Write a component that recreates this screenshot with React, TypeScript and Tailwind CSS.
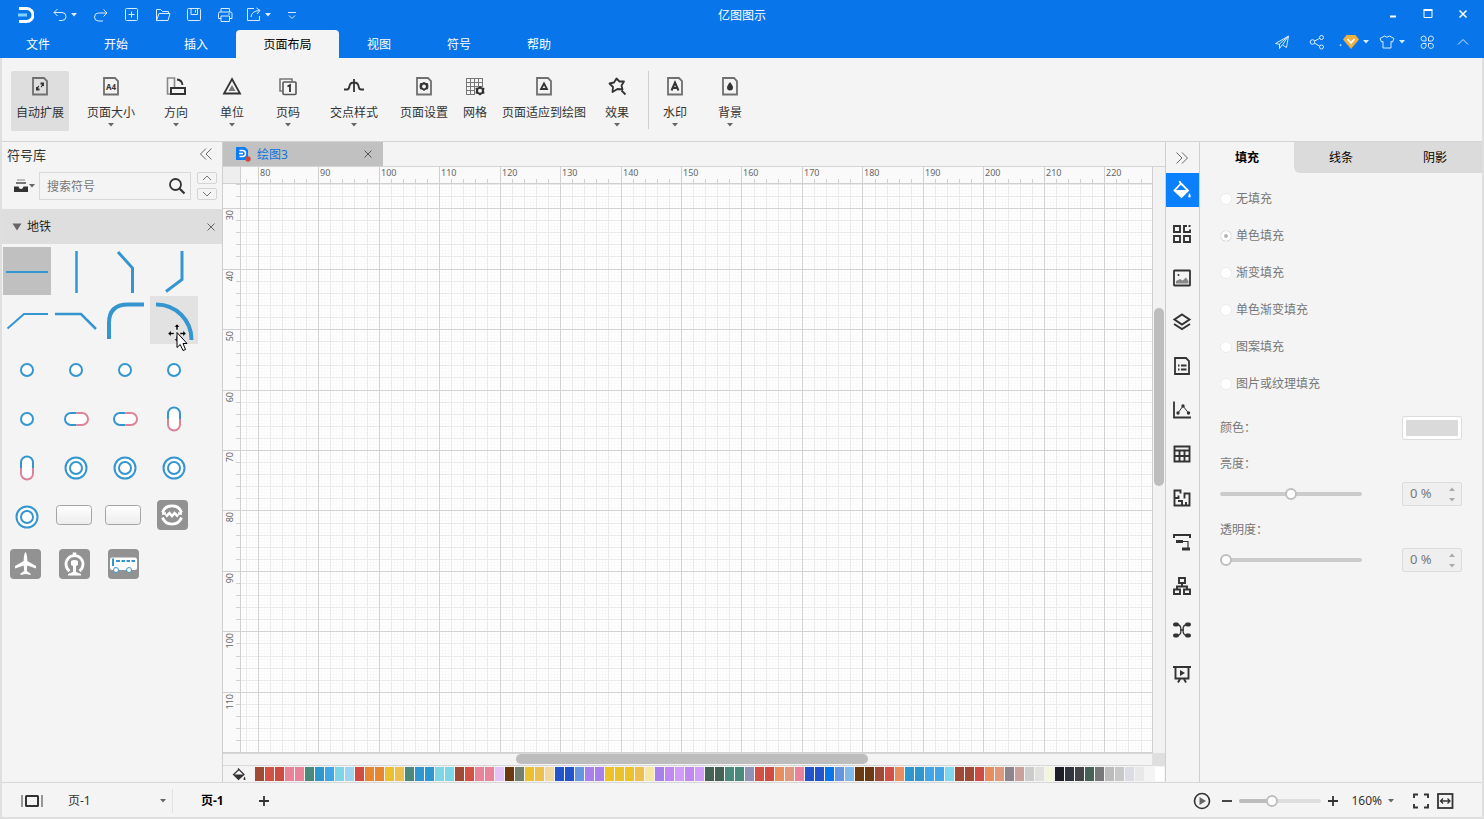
import type { ReactNode } from "react";

type IconProps = {
  size?: number;
  className?: string;
  children: ReactNode;
};

const Icon = ({ size = 20, className = "", children }: IconProps) => (
  <svg
    width={size}
    height={size}
    viewBox={`0 0 ${size} ${size}`}
    fill="none"
    stroke="currentColor"
    aria-hidden="true"
    className={`shrink-0 ${className}`}
  >
    {children}
  </svg>
);

const Caret = ({ className = "" }: { className?: string }) => (
  <svg width="6" height="4" viewBox="0 0 6 4" fill="currentColor" aria-hidden="true" className={`shrink-0 ${className}`}>
    <path d="M0 0H6L3 3.500Z" />
  </svg>
);

const CloseIcon = () => (
  <Icon size={10}>
    <path d="M1.500 1.500 8.500 8.500M8.500 1.500 1.500 8.500" />
  </Icon>
);

/* ---------- title bar and menu ---------- */

const quickActions = [
  {
    label: "重做",
    icon: <path d="M14 6H5.500a3.500 3.500 0 0 0 0 8H10M10.500 2.500 14 6l-3.500 3.500" />,
  },
  {
    label: "新建",
    icon: (
      <>
        <rect x="1.500" y="1.500" width="12" height="12" rx="1" />
        <path d="M7.500 4.500v6M4.500 7.500h6" />
      </>
    ),
  },
  {
    label: "打开",
    icon: <path d="M1.500 13.500v-11h4l2 2h6v2M1.500 13.500l2.500-7h11l-2 7z" />,
  },
  {
    label: "保存",
    icon: (
      <>
        <rect x="1.500" y="1.500" width="13" height="12" rx="1" />
        <path d="M5 1.500v6h6.500v-6M9.500 3v2.500" />
      </>
    ),
  },
  {
    label: "打印",
    icon: <path d="M4 5V1.500h8.500V5M4 11.500H1.500v-5Q1.500 5 3 5h10.500Q15 5 15 6.500v5h-2.500M4 9h8.500v5.500H4zM11 7h2" />,
  },
];

const tabs = [
  { name: "文件", className: "w-[76px]" },
  { name: "开始", className: "w-20" },
  { name: "插入", className: "w-20" },
  { name: "页面布局", className: "w-[103px] bg-[#f4f4f4] text-black" },
  { name: "视图", className: "w-20" },
  { name: "符号", className: "w-20" },
  { name: "帮助", className: "w-20" },
];

const Header = () => (
  <header className="shrink-0 bg-[#0876ea] text-[#d9ecff]">
    <div className="flex h-[30px] items-center px-1">
      <div className="flex flex-1 items-center">
        <svg width="16" height="16" viewBox="0 0 16 16" fill="none" className="ml-3.5 mr-3 shrink-0" aria-hidden="true">
          <path d="M1 1.500H8.500A6.300 6.300 0 0 1 8.500 14.500H1" stroke="#fff" strokeWidth="3" />
          <path d="M0 8H9" stroke="#7ed4ff" strokeWidth="3" />
        </svg>
        <button aria-label="撤销" className="flex w-[39px] items-center gap-[3px] pl-1.5">
          <Icon size={16}>
            <path d="M2 5.500H10a4 4 0 0 1 0 8H7M5.500 2 2 5.500 5.500 9" />
          </Icon>
          <Caret />
        </button>
        {quickActions.map(({ label, icon }) => (
          <button key={label} aria-label={label} className="flex w-[31px] justify-center">
            <Icon size={16}>{icon}</Icon>
          </button>
        ))}
        <button aria-label="导出" className="flex w-[39px] items-center gap-[3px] pl-1.5">
          <Icon size={16}>
            <path d="M8 1.500H1.500v12h12V9M5 10q.5-6 8.500-6.500M10.500 1 14 3.500 11 7" />
          </Icon>
          <Caret />
        </button>
        <button aria-label="自定义快速访问" className="flex w-[26px] justify-center">
          <Icon size={10}>
            <path d="M1 2.500h8M2 5.500 5 8.500 8 5.500" />
          </Icon>
        </button>
      </div>
      <h1 className="pt-0.5 text-xs text-white">亿图图示</h1>
      <div className="flex flex-1 justify-end text-white">
        <button aria-label="最小化" className="flex w-[35px] justify-center">
          <Icon size={12}>
            <path d="M3 7.500h6" strokeWidth="2" />
          </Icon>
        </button>
        <button aria-label="最大化" className="flex w-[35px] justify-center">
          <Icon size={12}>
            <path d="M2 1.500h8v7H2z" />
            <path d="M1.500 1h9" strokeWidth="2" />
          </Icon>
        </button>
        <button aria-label="关闭" className="flex w-[35px] justify-center">
          <Icon size={12}>
            <path d="M2.500 1.500 9.500 8.500M9.500 1.500 2.500 8.500" strokeWidth="1.500" />
          </Icon>
        </button>
      </div>
    </div>

    <div className="flex h-7 items-stretch">
      <nav className="flex flex-1 text-xs text-white">
        {tabs.map(({ name, className }) => (
          <button key={name} className={`rounded-t-sm pt-0.5 ${className}`}>
            {name}
          </button>
        ))}
      </nav>
      <div className="flex items-center pb-1 pr-3.5">
        <button aria-label="发送" className="flex w-[35px] justify-center">
          <Icon size={16}>
            <path d="M1.500 9.500 14.500 2l-2 11.500-4-2.500L14 2.500 5.500 10v4.500L8 11M1.500 9.500l4 .8" />
          </Icon>
        </button>
        <button aria-label="分享" className="flex w-[35px] justify-center">
          <Icon size={16}>
            <circle cx="3.500" cy="8" r="2.300" />
            <circle cx="12.500" cy="3.500" r="2" />
            <circle cx="12.500" cy="13" r="2" />
            <path d="M5.500 7 10.800 4.300M5.500 9.200l5.200 2.900" />
          </Icon>
        </button>
        <button aria-label="会员" className="ml-1 flex items-center">
          <span className="mr-px text-xs leading-4">.</span>
          <svg width="16" height="14" viewBox="0 0 16 14" aria-hidden="true">
            <path d="M3.500 0H12.500L16 4.500 8 14 0 4.500Z" fill="#f0b13f" />
            <path d="M4.500 4 8 8 11.500 4" fill="none" stroke="#fff" strokeWidth="1.800" />
          </svg>
          <Caret className="ml-1" />
        </button>
        <button aria-label="皮肤" className="ml-2.5 flex items-center gap-1">
          <Icon size={16}>
            <path d="M5.500 2Q8 4.500 10.500 2L15 4.500 13.500 8 12 7.500V14H4V7.500L2.500 8 1 4.500Z" />
          </Icon>
          <Caret />
        </button>
        <button aria-label="应用" className="ml-3.5 mr-[21px] flex">
          <Icon size={16}>
            <path d="M7 7H4a2.500 2.500 0 1 1 3-3ZM9.500 7V4a2.500 2.500 0 1 1 3 3ZM7 9.500V12.500a2.500 2.500 0 1 1-3-3ZM9.500 9.500h3a2.500 2.500 0 1 1-3 3Z" />
          </Icon>
        </button>
        <button aria-label="折叠功能区" className="flex">
          <Icon size={14}>
            <path d="M2 9.500 7 4.500 12 9.500" />
          </Icon>
        </button>
      </div>
    </div>
  </header>
);

/* ---------- ribbon ---------- */

const PageOutline = ({ children }: { children: ReactNode }) => (
  <>
    <path d="M3 2H14L17 5V18.500H3Z" stroke="#6f6f6f" strokeWidth="1.800" />
    {children}
  </>
);

const gear = "M10 6.500 12 7.500 13.500 7.500 14 10.300 13.500 13 12 13 10 14.500 8 13 6.500 13 6 10.300 6.500 7.500 8 7.500Z";

const ribbonItems = [
  {
    label: "自动扩展",
    className: "w-[58px] rounded-xs bg-[#dedede]",
    icon: (
      <PageOutline>
        <path d="M10.500 7.500H13V10M9.500 13.500H7V11" strokeWidth="2" />
        <path d="M12.500 8Q12.500 10 11 11M7.500 13Q7.500 11 9 10" strokeWidth="1.200" />
      </PageOutline>
    ),
  },
  {
    label: "页面大小",
    className: "w-[84px]",
    menu: true,
    icon: (
      <PageOutline>
        <text x="5" y="13.500" fontSize="8" fontWeight="700" fill="currentColor" stroke="none">
          A4
        </text>
      </PageOutline>
    ),
  },
  {
    label: "方向",
    className: "w-[46px]",
    menu: true,
    icon: (
      <>
        <path d="M5 18H1.500V2H8.500V11" stroke="#888" strokeWidth="1.600" />
        <path d="M5 12H19V18H5Z" strokeWidth="2" />
        <path d="M11 3.500Q16 4 16.500 9" strokeWidth="1.800" />
      </>
    ),
  },
  {
    label: "单位",
    className: "w-[66px]",
    menu: true,
    icon: (
      <>
        <path d="M10 3 18 17.500H2Z" strokeWidth="1.800" />
        <path d="M10 9 13.500 15H6.500Z" fill="#777" stroke="none" />
      </>
    ),
  },
  {
    label: "页码",
    className: "w-[46px]",
    menu: true,
    icon: (
      <>
        <path d="M4 15H2V3H14V5" stroke="#777" strokeWidth="1.600" />
        <rect x="5" y="6" width="13" height="12.500" rx="1" stroke="#555" strokeWidth="1.600" />
        <path d="M9.500 10.500 12 9V16" strokeWidth="1.800" />
      </>
    ),
  },
  {
    label: "交点样式",
    className: "w-[86px]",
    menu: true,
    icon: <path d="M0 13.500H3Q5 13.500 5.500 10Q6 6.500 10 6.500T14.500 10Q15 13.500 17 13.500H20M10 3V16" strokeWidth="1.800" />,
  },
  {
    label: "页面设置",
    className: "w-[54px]",
    icon: (
      <PageOutline>
        <path d={gear} fill="currentColor" />
        <circle cx="10" cy="10.500" r="1.900" fill="#f4f4f4" stroke="none" />
      </PageOutline>
    ),
  },
  {
    label: "网格",
    className: "w-12",
    icon: (
      <>
        <path
          d="M1.500 2V18.500M5.500 2V18.500M9.500 2V18.500M13.500 2V11M17.500 2V11M1 2.500H18M1 6.500H18M1 10.500H18M1 14.500H10M1 18.500H10"
          stroke="#777"
        />
        <path d="M15 10 17 11.500 19.500 12 19 14.500 19.500 17.500 17 18 15 19.500 13 18 10.500 17.500 11 14.500 10.500 12 13 11.500Z" fill="currentColor" stroke="none" />
        <circle cx="15" cy="14.700" r="2" fill="#f4f4f4" stroke="none" />
      </>
    ),
  },
  {
    label: "页面适应到绘图",
    className: "w-[90px]",
    icon: (
      <PageOutline>
        <path d="M10 7.500 13 13H7Z" strokeWidth="1.800" />
      </PageOutline>
    ),
  },
  {
    label: "效果",
    className: "w-14",
    menu: true,
    icon: (
      <>
        <path d="M2.500 7.500 7 6.500 9.500 2.500 12.500 5.500 17 5.500 14.500 9.500 15.500 13.500 10.500 13 5.500 16 6 11Z" strokeWidth="1.800" strokeLinejoin="round" />
        <path d="M14.500 14.500 18.500 18.500" strokeWidth="1.800" />
      </>
    ),
  },
  {
    label: "水印",
    className: "w-[52px]",
    menu: true,
    icon: (
      <PageOutline>
        <path d="M6.500 14.500 10 6.500 13.500 14.500M7.500 12H12.500" strokeWidth="2" />
      </PageOutline>
    ),
  },
  {
    label: "背景",
    className: "w-[58px]",
    menu: true,
    icon: (
      <PageOutline>
        <path d="M10 6Q13 9.500 13 11.500A3 3 0 0 1 7 11.500Q7 9.500 10 6Z" fill="currentColor" stroke="none" />
      </PageOutline>
    ),
  },
];

const Ribbon = () => (
  <div className="flex shrink-0 border-b border-[#d4d4d4] pb-2.5 pl-[9px] pt-[13px]">
    {ribbonItems.map(({ label, className, menu, icon }) => (
      <div key={label} className="flex">
        {label === "水印" && <div className="ml-[3px] h-[58px] w-px bg-[#cfcfcf]" />}
        <button className={`flex h-[60px] flex-col items-center pt-[5px] text-[#333] ${className}`}>
          <Icon>{icon}</Icon>
          <span className="mt-[9px] whitespace-nowrap text-xs leading-4">{label}</span>
          {menu && <Caret className="mt-0.5 text-[#666]" />}
        </button>
      </div>
    ))}
  </div>
);

/* ---------- symbol library ---------- */

const BLUE = "#3596cf";
const PINK = "#dd8399";

const station = <circle cx="24" cy="25" r="6" fill="#fff" stroke={BLUE} strokeWidth="2" />;

const interchange = (
  <>
    <circle cx="24" cy="25" r="10.500" fill="#fff" stroke={BLUE} strokeWidth="2" />
    <circle cx="24" cy="25" r="6" fill="#fff" stroke={BLUE} strokeWidth="2" />
  </>
);

const capsule = (
  <>
    <rect x="13" y="19" width="23" height="12" rx="6" fill="#fff" stroke="none" />
    <path d="M24.500 19H19a6 6 0 0 0 0 12h5.500" stroke={BLUE} strokeWidth="2" />
    <path d="M24.500 19H30a6 6 0 0 1 0 12h-5.500" stroke={PINK} strokeWidth="2" />
  </>
);

const uprightCapsule = (
  <>
    <rect x="18" y="13.500" width="12" height="23" rx="6" fill="#fff" stroke="none" />
    <path d="M18 25V19.500a6 6 0 0 1 12 0V25" stroke={BLUE} strokeWidth="2" />
    <path d="M18 25v5.500a6 6 0 0 0 12 0V25" stroke={PINK} strokeWidth="2" />
  </>
);

const plate = (
  <>
    <defs>
      <linearGradient id="plate" x1="0" y1="0" x2="0" y2="1">
        <stop offset="0" stopColor="#fff" />
        <stop offset="1" stopColor="#ececec" />
      </linearGradient>
    </defs>
    <rect x="4.500" y="13.500" width="35" height="19" rx="3" fill="url(#plate)" stroke="#a5a5a5" />
  </>
);

const badge = <rect x="7" y="8" width="31" height="30" rx="4" fill="#929292" stroke="none" />;

const symbols = [
  { name: "水平线", selected: true, art: <path d="M3 25H45" stroke={BLUE} strokeWidth="2" /> },
  { name: "垂直线", art: <path d="M24.500 4V46" stroke={BLUE} strokeWidth="2.500" /> },
  { name: "折线 1", art: <path d="M17 5 31.500 21V46" stroke={BLUE} strokeWidth="3" /> },
  { name: "折线 2", art: <path d="M32 4V32.500L16 44.500" stroke={BLUE} strokeWidth="3" /> },
  { name: "折线 3", art: <path d="M4.500 32.500 21 18H45" stroke={BLUE} strokeWidth="2" /> },
  { name: "折线 4", art: <path d="M3 18H29L44 33" stroke={BLUE} strokeWidth="2.500" /> },
  { name: "圆角线", art: <path d="M8 43V27Q8 8.500 27 8.500H43" stroke={BLUE} strokeWidth="4" /> },
  { name: "弧线", hovered: true, art: <path d="M6 8.500A35 35 0 0 1 41.500 44" stroke={BLUE} strokeWidth="4" /> },
  { name: "站点 1", art: station },
  { name: "站点 2", art: station },
  { name: "站点 3", art: station },
  { name: "站点 4", art: station },
  { name: "站点 5", art: station },
  { name: "换乘 1", art: capsule },
  { name: "换乘 2", art: capsule },
  { name: "换乘 3", art: uprightCapsule },
  { name: "换乘 4", art: uprightCapsule },
  { name: "枢纽 1", art: interchange },
  { name: "枢纽 2", art: interchange },
  { name: "枢纽 3", art: interchange },
  { name: "枢纽 4", art: interchange },
  { name: "标牌 1", art: plate },
  { name: "标牌 2", art: plate },
  {
    name: "地铁",
    art: (
      <>
        {badge}
        <path d="M12.500 20.500A10 9.500 0 0 1 31.500 20.500M12.500 25.500A10 9.500 0 0 0 31.500 25.500" stroke="#fff" strokeWidth="2.800" />
        <path d="M12 21.500H16M28 21.500H32M16 24.500 19.500 21 22 24 24.500 21 28 24.500" stroke="#fff" strokeWidth="2.500" />
      </>
    ),
  },
  {
    name: "机场",
    art: (
      <>
        {badge}
        <path
          d="M22.500 11Q24.300 13 24.300 20L33 25V27.500L24.300 24.500 23.800 30 27.500 32.500V34L22.500 33 17.500 34V32.500L21.200 30 20.700 24.500 12 27.500V25L20.700 20Q20.700 13 22.500 11Z"
          fill="#fff"
          stroke="none"
        />
      </>
    ),
  },
  {
    name: "铁路",
    art: (
      <>
        {badge}
        <path d="M17.500 30A8.500 8.500 0 1 1 27.500 30" stroke="#fff" strokeWidth="2.800" />
        <path d="M22.500 11.500V14" stroke="#fff" strokeWidth="3.500" />
        <path d="M19 20Q22.500 18 26 20V24L24 25V31L29 33V34.500H16V33L21 31V25L19 24Z" fill="#fff" stroke="none" />
      </>
    ),
  },
  {
    name: "公交",
    art: (
      <>
        {badge}
        <rect x="9" y="16.500" width="27" height="12.500" rx="2" fill="#fff" stroke="none" />
        <path d="M12 17.500V25M15 20H19M20.500 20H24M25.500 20H29M30.500 20H34" stroke={BLUE} strokeWidth="2" />
        <circle cx="15" cy="29" r="2.500" fill="#fff" stroke={BLUE} />
        <circle cx="28" cy="29" r="2.500" fill="#fff" stroke={BLUE} />
      </>
    ),
  },
];

const MoveCursor = () => (
  <svg width="22" height="28" viewBox="0 0 22 28" aria-hidden="true" className="pointer-events-none absolute left-[17px] top-7">
    <path
      d="M10 0 13 3H11V6H9V3H7ZM1 9.500 4 6.500V8.500H7V10.500H4V12.500ZM19 9.500 16 6.500V8.500H13V10.500H16V12.500ZM10 18 7 15H9V12H10Z"
      fill="#000"
      stroke="#fff"
      strokeWidth="0.500"
    />
    <path d="M10 8.500V23.500L13.200 20.500 16 26.500 18.500 25.500 16 19.500H20Z" fill="#fff" stroke="#000" />
  </svg>
);

const SymbolLibrary = () => (
  <aside className="flex w-[221px] shrink-0 flex-col border-r border-[#cfcfcf]">
    <div className="flex h-[26px] items-center justify-between pl-[5px] pr-[9px]">
      <h2 className="text-[13px] leading-5 text-[#333]">符号库</h2>
      <button aria-label="收起" className="pb-0.5 text-[#666]">
        <Icon size={14}>
          <path d="M7 1.500 1.500 7 7 12.500M12.500 1.500 7 7 12.500 12.500" />
        </Icon>
      </button>
    </div>
    <div className="flex items-center pb-2 pl-[11px] pr-[5px] pt-1">
      <button aria-label="符号库列表" className="flex w-[26px] shrink-0 items-center text-[#333]">
        <Icon size={16}>
          <path d="M4 2H12" stroke="#888" />
          <path d="M3 5H13" stroke="#777" strokeWidth="2" />
          <path d="M1 8.500H5.500Q6 11 8 11T10.500 8.500H15V14H1Z" fill="currentColor" stroke="none" />
        </Icon>
        <Caret className="text-[#666]" />
      </button>
      <label className="flex h-7 min-w-0 flex-1 items-center border border-[#d9d9d9] pl-[7px] pr-1">
        <input
          aria-label="搜索符号"
          placeholder="搜索符号"
          className="min-w-0 flex-1 bg-transparent pt-0.5 text-xs outline-none placeholder:text-[#777]"
        />
        <Icon size={18} className="text-[#333]">
          <circle cx="7.500" cy="7.500" r="5.500" strokeWidth="1.800" />
          <path d="M11.500 11.500 16.500 16.500" strokeWidth="2.200" />
        </Icon>
      </label>
      <div className="ml-1.5 flex flex-col gap-1 text-[#777]">
        <button aria-label="上一个" className="flex h-3 w-5 items-center justify-center rounded-xs border border-[#d4d4d4]">
          <Icon size={10}>
            <path d="M1 7 5 3 9 7" />
          </Icon>
        </button>
        <button aria-label="下一个" className="flex h-3 w-5 items-center justify-center rounded-xs border border-[#d4d4d4]">
          <Icon size={10}>
            <path d="M1 3 5 7 9 3" />
          </Icon>
        </button>
      </div>
    </div>
    <div className="mt-px flex h-[35px] items-center bg-[#dedede] pl-2.5 pr-1.5 text-[#666]">
      <svg width="10" height="8" viewBox="0 0 10 8" fill="currentColor" aria-hidden="true">
        <path d="M0.500 0.500H9.500L5 7.500Z" />
      </svg>
      <h3 className="ml-[5px] flex-1 text-xs text-[#222]">地铁</h3>
      <button aria-label="关闭地铁">
        <CloseIcon />
      </button>
    </div>
    <div className="grid grid-cols-[repeat(4,48px)] gap-px pl-px pt-[3px]">
      {symbols.map(({ name, selected, hovered, art }) => (
        <button
          key={name}
          aria-label={name}
          className={`relative h-12 w-12 ${selected ? "bg-[#c0c0c0]" : ""} ${hovered ? "bg-[#e2e2e2]" : ""}`}
        >
          <Icon size={48}>{art}</Icon>
          {hovered && <MoveCursor />}
        </button>
      ))}
    </div>
  </aside>
);

/* ---------- canvas ---------- */

// 10 mm at 160 % zoom
const STEP = 60.472;
const LEFT_ORIGIN = 17.2;
const TOP_ORIGIN = 24.6;

const positions = (origin: number, step: number, length: number) => {
  const list: number[] = [];
  for (let p = origin - Math.floor(origin / step) * step; p < length; p += step) {
    list.push(Math.floor(p) + 0.5);
  }
  return list;
};

const gridPath = (step: number) =>
  positions(LEFT_ORIGIN, step, 4000)
    .map((x) => `M${x} 0V3000`)
    .join("") +
  positions(TOP_ORIGIN, step, 3000)
    .map((y) => `M0 ${y}H4000`)
    .join("");

const horizontalLabels = Array.from({ length: 15 }, (_, i) => 80 + i * 10);
const verticalLabels = Array.from({ length: 9 }, (_, i) => 30 + i * 10);

const HorizontalRuler = () => (
  <div className="overflow-hidden border-b border-[#d0d0d0] bg-[#fafafa]">
    <svg width="100%" height="16" className="block" aria-hidden="true">
      <path d={positions(LEFT_ORIGIN, STEP / 5, 4000).map((x) => `M${x} 12V16`).join("")} stroke="#d0d0d0" />
      <path d={positions(LEFT_ORIGIN, STEP, 4000).map((x) => `M${x} 0V16`).join("")} stroke="#d0d0d0" />
      {horizontalLabels.map((value, i) => (
        <text key={value} x={Math.floor(LEFT_ORIGIN + i * STEP) + 2} y="9" fontSize="9" fill="#666">
          {value}
        </text>
      ))}
    </svg>
  </div>
);

const VerticalRuler = () => (
  <div className="relative overflow-hidden border-r border-[#d0d0d0] bg-[#fafafa]">
    <svg width="17" height="100%" className="absolute inset-0" aria-hidden="true">
      <path d={positions(TOP_ORIGIN, STEP / 5, 3000).map((y) => `M13 ${y}H17`).join("")} stroke="#d0d0d0" />
      <path d={positions(TOP_ORIGIN, STEP, 3000).map((y) => `M0 ${y}H17`).join("")} stroke="#d0d0d0" />
      {verticalLabels.map((value, i) => {
        const y = Math.floor(TOP_ORIGIN + i * STEP) + 2;
        return (
          <text key={value} x="10" y={y} fontSize="9" fill="#666" textAnchor="end" transform={`rotate(-90 10 ${y})`}>
            {value}
          </text>
        );
      })}
    </svg>
  </div>
);

const swatches = `
  a04a35 d35045 cc4c42 e8839a e8839a 4a8a7c 2f97d0 42a5e8 7cd6e6 9ed4ef
  d04c42 e8852f e8852f ecc02c edbf4c 4a8a7c 2f97d0 2f97d0 7cd6e6 7cd6e6
  a04a35 d35045 e8839a e8839a e4c4f6 6b3a12 74806c ecc02c edbf4c f0d8a0
  2255cc 2255cc 6495e0 a880ec a880ec ebc228 ebc228 ebc228 edbf4c f4e8a4
  a880ec c088f0 d09cfa c088f0 d09cfa 466155 466155 4a8a7c 4a8a7c 8e92b4
  d35045 d04c42 e88d5e e0987c e8839a 2255cc 2255cc 0876ea 6495e0 80b8ea
  6b3a12 6b3a12 a04a35 d35045 e88d5e 2f97d0 2f97d0 42a5e8 42a5e8 7cd6ee
  a04a35 a04a35 d04c42 e88d5e e0987c 90848c c8a09c cccccc e0e0dc f4f6dc
  1e1e28 30343e 444448 466155 78787a bcbcbc c8c8c8 dcdce4 e8e8e8 f4f4f4
  ffffff`
  .trim()
  .split(/\s+/);

const Bucket = () => (
  <>
    <path d="M6 1.500 12 7.500 6.500 12.500 1.500 7.500 7 2.500" strokeWidth="1.200" />
    <path d="M1.500 7.500H12L6.500 12.500Z" fill="currentColor" stroke="none" />
    <path d="M12.500 9.500Q14.500 13 12.500 13T12.500 9.500Z" fill="currentColor" stroke="none" />
  </>
);

const Workspace = () => (
  <main className="flex min-w-0 flex-1 flex-col">
    <div className="flex h-[25px] shrink-0 border-b border-[#d4d4d4]">
      <div className="flex w-40 items-center bg-[#c1c1c1] pl-[13px] pr-2.5">
        <svg width="16" height="16" viewBox="0 0 16 16" aria-hidden="true">
          <path d="M0 1H9L12 4V14H0Z" fill="#0c7cf2" />
          <path d="M3.500 4.500H6.500A3 3 0 0 1 6.500 10.500H3.500M3 7.500H7" fill="none" stroke="#fff" strokeWidth="1.500" />
          <circle cx="12" cy="13" r="2.700" fill="#d0453c" />
        </svg>
        <button className="ml-[5px] flex-1 pt-px text-left text-xs text-[#0c72dc]">绘图3</button>
        <button aria-label="关闭绘图3" className="text-[#555]">
          <CloseIcon />
        </button>
      </div>
    </div>

    <div className="grid min-h-0 flex-1 grid-cols-[18px_minmax(0,1fr)_13px] grid-rows-[17px_minmax(0,1fr)_13px]">
      <div className="border-b border-r border-[#d0d0d0] bg-[#eee]" />
      <HorizontalRuler />
      <div className="row-span-2 flex flex-col border-l border-[#d0d0d0] bg-[#f2f2f2] pl-px pt-[141px]">
        <div className="h-[178px] w-[10px] rounded-full bg-[#bdbdbd]" />
      </div>
      <VerticalRuler />
      <div className="relative overflow-hidden bg-white">
        <svg width="100%" height="100%" className="absolute inset-0" fill="none" aria-hidden="true">
          <path d={gridPath(STEP / 20)} stroke="#fafafa" />
          <path d={gridPath(STEP / 5)} stroke="#e9e9e9" />
          <path d={gridPath(STEP)} stroke="#d2d2d2" />
        </svg>
      </div>
      <div className="col-span-2 flex border-y border-[#d8d8d8] pl-[293px]">
        <div className="h-[10px] w-[352px] rounded-full bg-[#bdbdbd]" />
      </div>
      <div className="bg-[#dfdfdf]" />
    </div>

    <div className="flex h-4 shrink-0 items-center">
      <button aria-label="填充颜色" className="flex w-8 shrink-0 justify-center text-[#333]">
        <Icon size={14}>
          <Bucket />
        </Icon>
      </button>
      <div className="flex min-w-0 gap-px overflow-hidden">
        {swatches.map((color, i) => (
          <button key={i} aria-label={`#${color}`} className="h-3.5 w-[9px] shrink-0" style={{ backgroundColor: `#${color}` }} />
        ))}
      </div>
    </div>
  </main>
);

/* ---------- right side ---------- */

const railItems = [
  {
    label: "填充",
    icon: (
      <>
        <path d="M7.500 1 9 4.500M9 3.500 16 10.500 9.500 17 2.500 10.500Z" strokeWidth="1.800" />
        <path d="M2.500 10H16.500L9.500 17.500Z" fill="currentColor" stroke="none" />
        <path d="M17.500 13Q20 17.500 17.500 17.500T17.500 13Z" fill="currentColor" stroke="none" />
      </>
    ),
  },
  {
    label: "符号",
    icon: <path d="M2 2H8V8H2ZM2 12H8V18H2ZM12 12H18V18H12ZM15 2H12V8H18V5.500M16.500 2H18.500" strokeWidth="1.900" />,
  },
  {
    label: "图片",
    icon: (
      <>
        <rect x="2" y="2.500" width="16" height="15" rx="0.500" strokeWidth="1.800" />
        <path d="M4 15.500V13L8 11 10.500 12.500 14 9.500 16.500 13V15.500Z" fill="#888" stroke="none" />
        <circle cx="6.500" cy="7" r="1" fill="currentColor" stroke="none" />
      </>
    ),
  },
  {
    label: "图层",
    icon: <path d="M10 2.500 17.500 7.500 10 12.500 2.500 7.500ZM2 12 10 17 18 12" strokeWidth="2" />,
  },
  {
    label: "文档",
    icon: <path d="M3 2H14L17 5V18H3ZM6 9.500H7.500M9 9.500H14.500M6 13.500H7.500M9 13.500H14.500" strokeWidth="1.800" />,
  },
  {
    label: "图表",
    icon: (
      <>
        <path d="M2 1.500V17.500H19" strokeWidth="1.800" />
        <path d="M6 13 11 6 16.500 13" />
        <circle cx="6" cy="13" r="1.700" fill="currentColor" stroke="none" />
        <circle cx="11" cy="6" r="1.700" fill="currentColor" stroke="none" />
        <circle cx="16.500" cy="13" r="1.700" fill="currentColor" stroke="none" />
      </>
    ),
  },
  {
    label: "表格",
    icon: <path d="M2.500 2.500H17.500V17.500H2.500ZM2 6.500H18M2 12H18M7.500 7V18M12.500 7V18" strokeWidth="1.900" />,
  },
  {
    label: "平面图",
    icon: <path d="M8.500 5.500V2.500H2.500V17.500H17.500V5.500H12.500V10.500M2.500 10H6.500V7.500M10 17.500V13H6M14 17.500V14" strokeWidth="1.900" />,
  },
  {
    label: "甘特图",
    icon: (
      <>
        <path d="M2 6V3H18V6" strokeWidth="2" />
        <path d="M4 9.500H11M10 17H18" strokeWidth="3" />
        <path d="M11 9.500H16V16" strokeWidth="1.200" />
      </>
    ),
  },
  {
    label: "组织结构",
    icon: <path d="M7 2H13V7H7ZM2 13.500H8V18H2ZM12 13.500H18V18H12ZM10 7V10M5 13V10.500H15V13" strokeWidth="1.900" />,
  },
  {
    label: "思维导图",
    icon: (
      <>
        <path d="M3 4.500H5M15 4.500H17M3 15.500H5M15 15.500H17" strokeWidth="4" strokeLinecap="round" />
        <path d="M5 4.500Q9 4.500 9 10T5 15.500M15 4.500Q11 4.500 11 10T15 15.500M8 10H12" strokeWidth="1.300" />
      </>
    ),
  },
  {
    label: "演示",
    icon: (
      <>
        <path d="M1 3H19" strokeWidth="2" />
        <path d="M3.500 3V14.500H16.500V3M8 15 6 18.500M12 15 14 18.500" strokeWidth="1.900" />
        <path d="M8 6 13 9 8 12Z" fill="currentColor" stroke="none" />
      </>
    ),
  },
];

const Rail = () => (
  <nav className="flex w-[35px] shrink-0 flex-col border-x border-[#cfcfcf] text-[#333]">
    <button aria-label="收起面板" className="flex h-[31px] shrink-0 items-center pl-[9px] text-[#666]">
      <Icon size={14}>
        <path d="M1.500 1.500 7 7 1.500 12.500M7 1.500 12.500 7 7 12.500" />
      </Icon>
    </button>
    <div className="flex flex-col gap-2.5">
      {railItems.map(({ label, icon }, i) => (
        <button key={label} aria-label={label} className={`flex h-[34px] items-center pl-1.5 ${i === 0 ? "bg-[#0a80ff] text-white" : ""}`}>
          <Icon>{icon}</Icon>
        </button>
      ))}
    </div>
  </nav>
);

const fills = ["无填充", "单色填充", "渐变填充", "单色渐变填充", "图案填充", "图片或纹理填充"];

const PercentSlider = ({ id, label, min }: { id: string; label: string; min: number }) => (
  <div>
    <label htmlFor={id} className="block leading-5">
      {label}
    </label>
    <div className="mt-2 flex h-6 items-center justify-between">
      <input
        id={id}
        type="range"
        min={min}
        max={100}
        defaultValue={0}
        className="h-1 w-[142px] appearance-none rounded-full bg-[#cbcbcb] [&::-webkit-slider-thumb]:h-3 [&::-webkit-slider-thumb]:w-3 [&::-webkit-slider-thumb]:appearance-none [&::-webkit-slider-thumb]:rounded-full [&::-webkit-slider-thumb]:border-2 [&::-webkit-slider-thumb]:border-[#bfbfbf] [&::-webkit-slider-thumb]:bg-white"
      />
      <div className="flex h-6 w-[60px] items-center rounded-xs border border-[#dcdcdc] bg-[#efefef] pl-[7px] pr-1.5">
        <input aria-label={`${label}数值`} defaultValue="0 %" className="w-8 min-w-0 flex-1 bg-transparent text-[13px] outline-none" />
        <div className="flex flex-col gap-[7px] text-[#aaa]">
          <button aria-label="增加">
            <Caret className="block rotate-180" />
          </button>
          <button aria-label="减少">
            <Caret className="block" />
          </button>
        </div>
      </div>
    </div>
  </div>
);

const FormatPanel = () => (
  <aside className="w-[282px] shrink-0 text-xs text-[#777]">
    <div className="flex h-[31px] text-black">
      <button className="flex-1 font-bold">填充</button>
      <div className="flex flex-2 rounded-bl-md bg-[#dbdbdb]">
        <button className="flex-1">线条</button>
        <button className="flex-1">阴影</button>
      </div>
    </div>
    <div className="px-5 pt-4">
      <fieldset className="flex flex-col gap-[17px]">
        {fills.map((fill, i) => (
          <label key={fill} className="flex h-5 items-center gap-1">
            <input
              type="radio"
              name="fill"
              defaultChecked={i === 1}
              className="h-3 w-3 appearance-none rounded-full border border-[#ececec] bg-white checked:bg-[#b5b5b5] checked:shadow-[inset_0_0_0_3px_#fff]"
            />
            {fill}
          </label>
        ))}
      </fieldset>
      <div className="mt-[22px] flex h-6 items-center justify-between">
        <span>颜色：</span>
        <button aria-label="颜色" className="h-6 w-[60px] rounded-xs border border-[#dcdcdc] bg-white p-[3px]">
          <span className="block h-full bg-[#dadada]" />
        </button>
      </div>
      <div className="mt-3.5 flex flex-col gap-3.5">
        <PercentSlider id="brightness" label="亮度：" min={-100} />
        <PercentSlider id="opacity" label="透明度：" min={0} />
      </div>
    </div>
  </aside>
);

/* ---------- status bar ---------- */

const StatusBar = () => (
  <footer className="flex h-[35px] shrink-0 items-center justify-between border-t border-[#d8d8d8] pt-px text-xs text-[#333]">
    <div className="flex items-center">
      <button aria-label="页面缩略图" className="ml-[18px] flex w-6 justify-center">
        <svg width="22" height="14" viewBox="0 0 22 14" fill="none" stroke="currentColor" aria-hidden="true">
          <path d="M1 1V13M21 1V13" stroke="#777" strokeWidth="1.500" />
          <rect x="5" y="2" width="12" height="10" rx="0.500" strokeWidth="2" />
        </svg>
      </button>
      <div className="ml-6 flex w-[98px] items-center">
        <select aria-label="页面" className="min-w-0 flex-1 appearance-none bg-transparent outline-none">
          <option>页-1</option>
        </select>
        <Caret className="text-[#666]" />
      </div>
      <div className="ml-1.5 h-6 w-px bg-[#e2e2e2]" />
      <button className="ml-7 font-bold text-black">页-1</button>
      <button aria-label="添加页面" className="ml-[34px]">
        <Icon size={12}>
          <path d="M6 1V11M1 6H11" strokeWidth="1.800" />
        </Icon>
      </button>
    </div>
    <div className="flex items-center pr-7">
      <button aria-label="播放" className="mr-2.5">
        <Icon size={18}>
          <circle cx="9" cy="9" r="7.500" strokeWidth="1.600" />
          <path d="M6.500 5 13 9 6.500 13Z" fill="#666" stroke="none" />
        </Icon>
      </button>
      <button aria-label="缩小">
        <Icon size={12}>
          <path d="M1 6H11" strokeWidth="1.800" />
        </Icon>
      </button>
      <input
        type="range"
        aria-label="缩放"
        min={0}
        max={100}
        defaultValue={38}
        className="mx-1.5 h-1 w-[82px] appearance-none rounded-full bg-linear-to-r from-[#bdbdbd] from-40% to-[#dedede] to-40% [&::-webkit-slider-thumb]:h-3 [&::-webkit-slider-thumb]:w-3 [&::-webkit-slider-thumb]:appearance-none [&::-webkit-slider-thumb]:rounded-full [&::-webkit-slider-thumb]:border-2 [&::-webkit-slider-thumb]:border-[#bfbfbf] [&::-webkit-slider-thumb]:bg-white"
      />
      <button aria-label="放大">
        <Icon size={12}>
          <path d="M6 1V11M1 6H11" strokeWidth="1.800" />
        </Icon>
      </button>
      <button className="ml-3 flex items-center gap-1.5">
        160%
        <Caret className="text-[#666]" />
      </button>
      <button aria-label="全屏" className="ml-[18px]">
        <Icon size={18}>
          <path d="M2 6V2.500H6M12 2.500H16V6M16 12V15.500H12M6 15.500H2V12" strokeWidth="1.900" />
        </Icon>
      </button>
      <button aria-label="适应宽度" className="ml-1.5">
        <Icon size={18}>
          <rect x="2" y="2" width="14.500" height="14" strokeWidth="1.800" />
          <path d="M5 9H13.500M7 6.500 4.500 9 7 11.500M11.500 6.500 14 9 11.500 11.500" strokeWidth="1.300" />
        </Icon>
      </button>
    </div>
  </footer>
);

export default function App() {
  return (
    <div className="flex h-screen flex-col overflow-hidden bg-[#f4f4f4] font-['Noto_Sans','Noto_Sans_CJK_SC',sans-serif]">
      <Header />
      <div className="flex min-h-0 flex-1 flex-col border-x-2 border-b-2 border-[#dfdfdf]">
        <Ribbon />
        <div className="flex min-h-0 flex-1">
          <SymbolLibrary />
          <Workspace />
          <Rail />
          <FormatPanel />
        </div>
        <StatusBar />
      </div>
    </div>
  );
}
